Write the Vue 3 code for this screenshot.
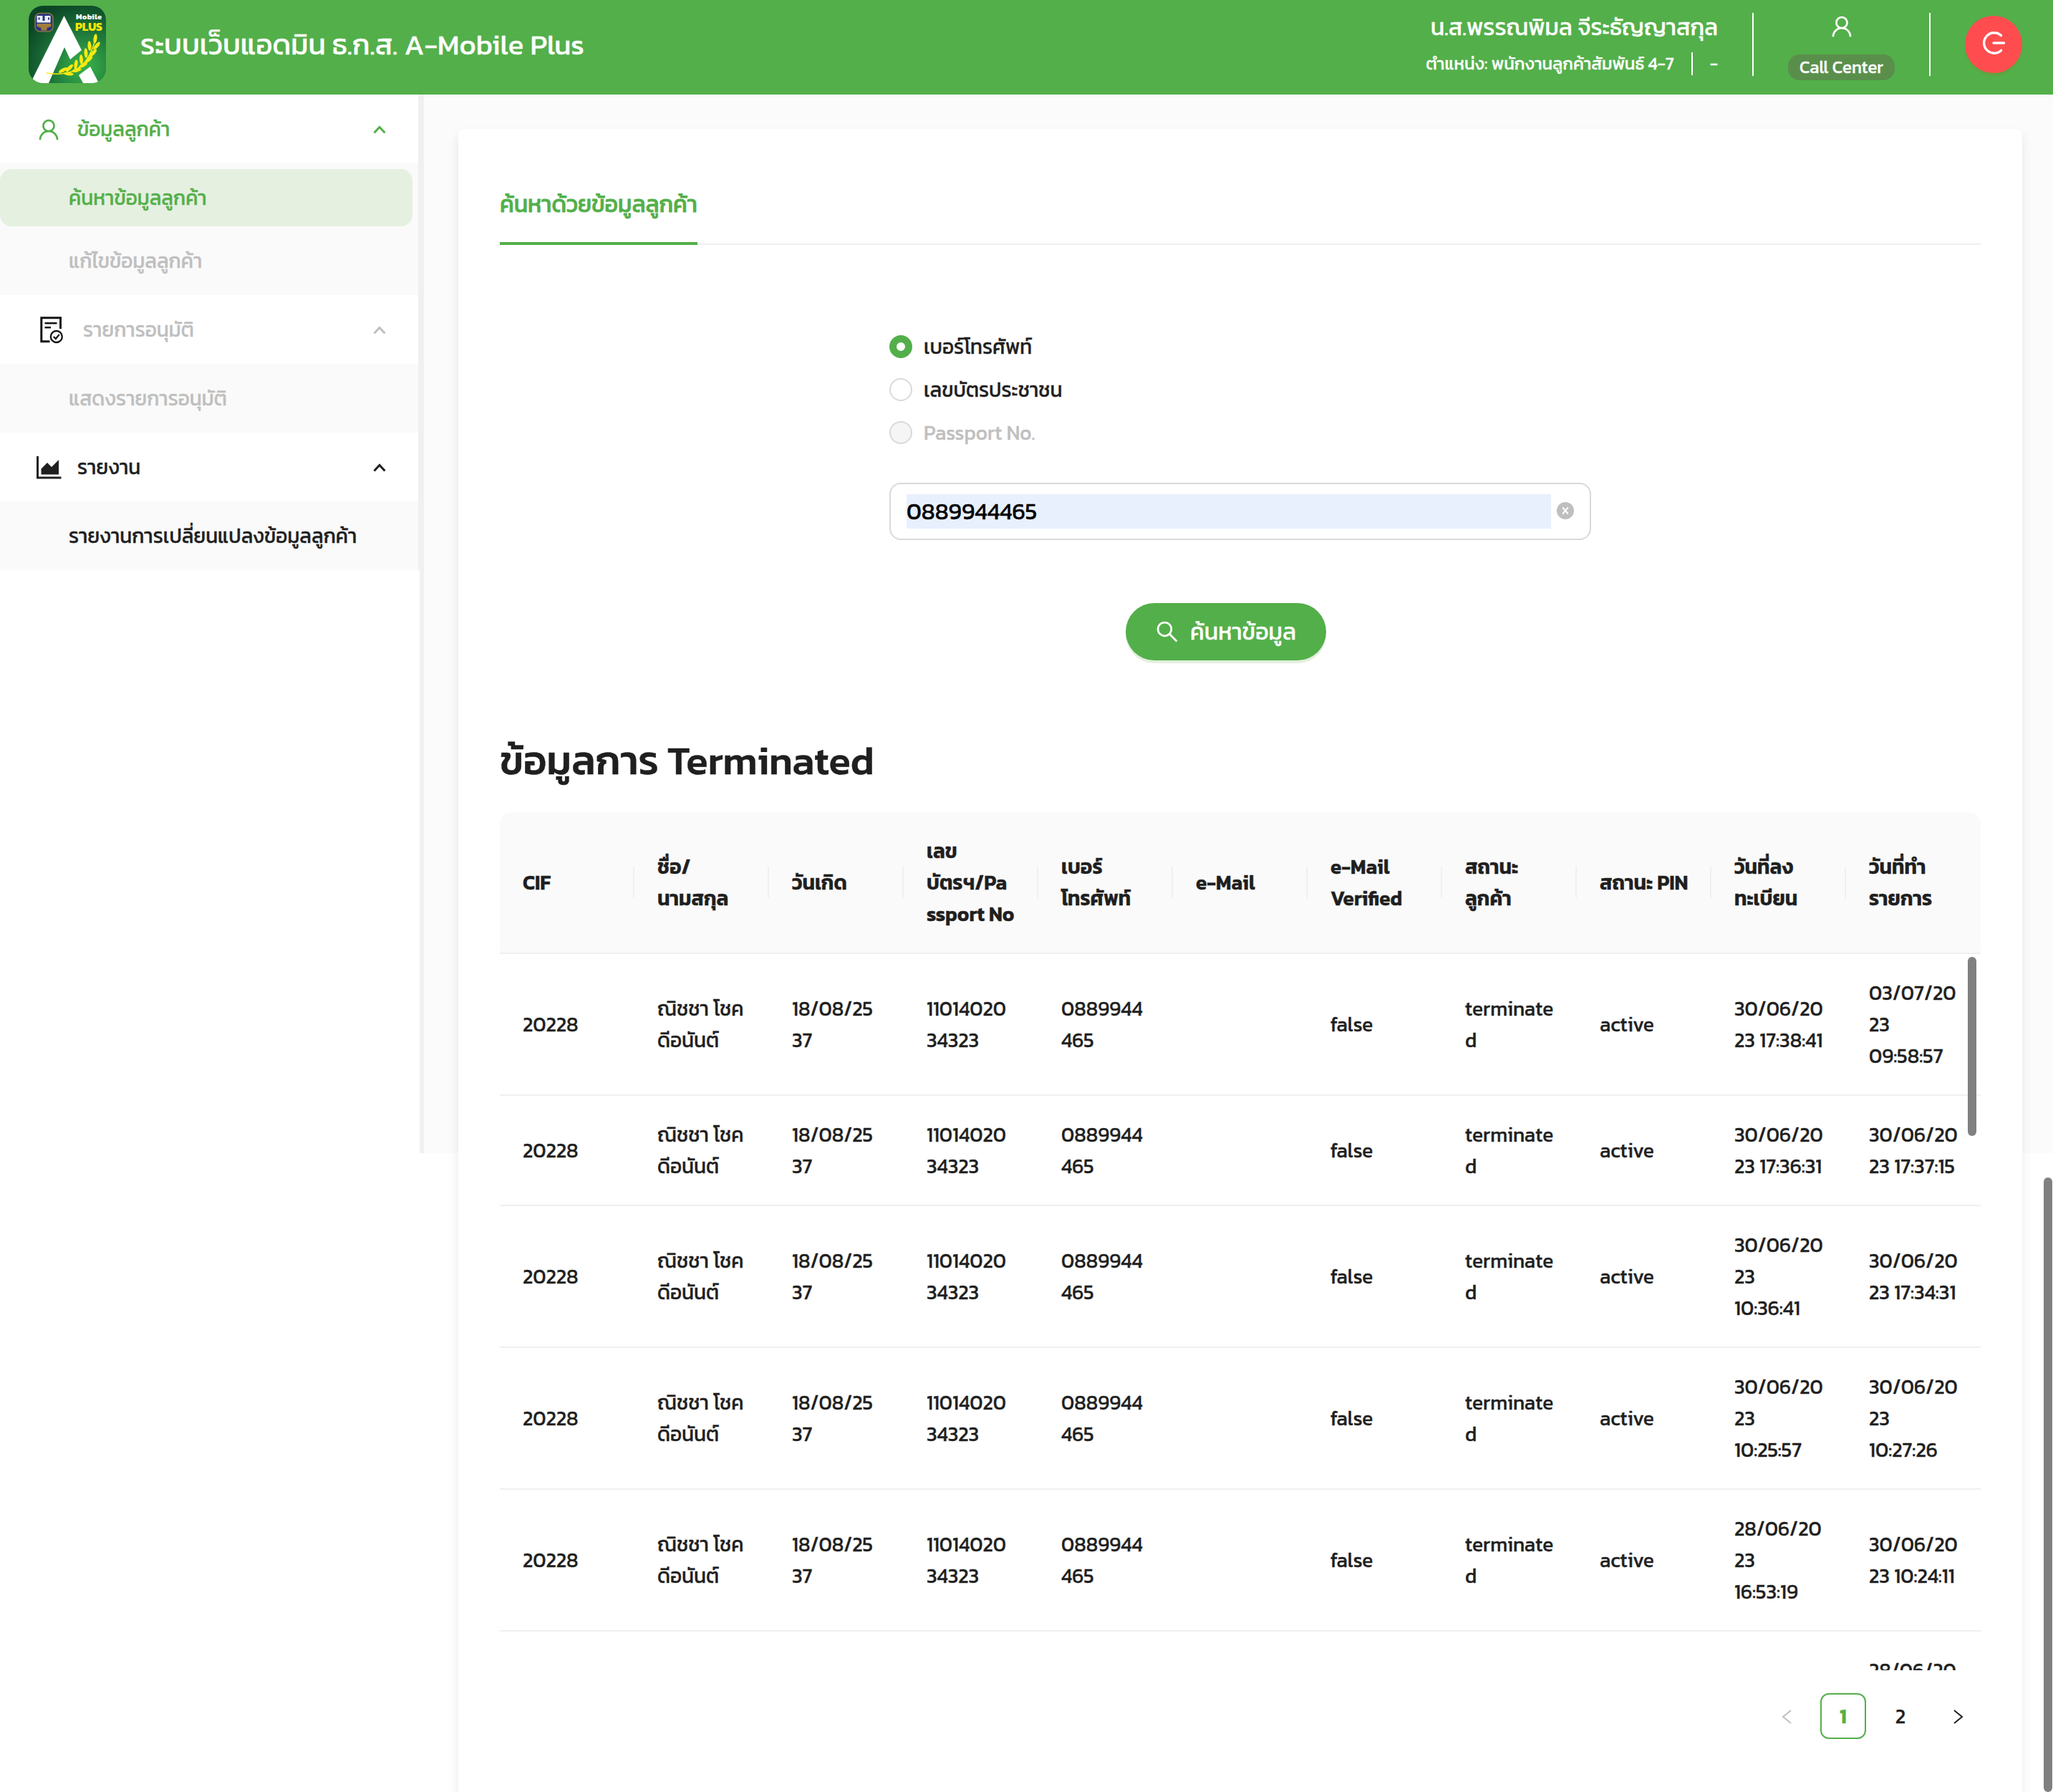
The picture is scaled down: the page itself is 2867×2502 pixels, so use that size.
<script setup>
const menu = [
  {
    icon: 'user', label: 'ข้อมูลลูกค้า', state: 'active',
    children: [
      { label: 'ค้นหาข้อมูลลูกค้า', state: 'selected' },
      { label: 'แก้ไขข้อมูลลูกค้า', state: 'disabled' },
    ],
  },
  {
    icon: 'approve', label: 'รายการอนุมัติ', state: 'disabled',
    children: [{ label: 'แสดงรายการอนุมัติ', state: 'disabled' }],
  },
  {
    icon: 'chart', label: 'รายงาน', state: '',
    children: [{ label: 'รายงานการเปลี่ยนแปลงข้อมูลลูกค้า', state: '' }],
  },
]

const searchTypes = [
  { label: 'เบอร์โทรศัพท์', state: 'checked' },
  { label: 'เลขบัตรประชาชน', state: '' },
  { label: 'Passport No.', state: 'disabled' },
]

const columns = [
  ['CIF'],
  ['ชื่อ/', 'นามสกุล'],
  ['วันเกิด'],
  ['เลข', 'บัตรฯ/Pa', 'ssport No'],
  ['เบอร์', 'โทรศัพท์'],
  ['e-Mail'],
  ['e-Mail', 'Verified'],
  ['สถานะ', 'ลูกค้า'],
  ['สถานะ PIN'],
  ['วันที่ลง', 'ทะเบียน'],
  ['วันที่ทำ', 'รายการ'],
]

const record = (registered, updated) => [
  ['20228'],
  ['ณิชชา โชค', 'ดีอนันต์'],
  ['18/08/25', '37'],
  ['11014020', '34323'],
  ['0889944', '465'],
  [],
  ['false'],
  ['terminate', 'd'],
  ['active'],
  registered,
  updated,
]

const rows = [
  record(['30/06/20', '23 17:38:41'], ['03/07/20', '23', '09:58:57']),
  record(['30/06/20', '23 17:36:31'], ['30/06/20', '23 17:37:15']),
  record(['30/06/20', '23', '10:36:41'], ['30/06/20', '23 17:34:31']),
  record(['30/06/20', '23', '10:25:57'], ['30/06/20', '23', '10:27:26']),
  record(['28/06/20', '23', '16:53:19'], ['30/06/20', '23 10:24:11']),
]

const userPath = 'M858.5 763.6a374 374 0 00-80.6-119.5 375.63 375.63 0 00-119.5-80.6c-.4-.2-.8-.3-1.2-.5C719.5 518 760 444.7 760 362c0-137-111-248-248-248S264 225 264 362c0 82.7 40.5 156 102.8 201.1-.4.2-.8.3-1.2.5-44.8 18.9-85 46-119.5 80.6a375.63 375.63 0 00-80.6 119.5A371.7 371.7 0 00136 901.8a8 8 0 008 8.2h60c4.4 0 7.9-3.5 8-7.8 2-77.2 33-149.5 87.8-204.3 56.7-56.7 132-87.9 212.2-87.9s155.5 31.2 212.2 87.9C779 752.7 810 825 812 902.2c.1 4.4 3.6 7.8 8 7.8h60a8 8 0 008-8.2c-1-47.8-10.9-94.3-29.5-138.2zM512 534c-45.9 0-89.1-17.9-121.6-50.4S340 407.9 340 362c0-45.9 17.9-89.1 50.4-121.6S466.1 190 512 190s89.1 17.9 121.6 50.4S684 316.1 684 362c0 45.9-17.9 89.1-50.4 121.6S557.9 534 512 534z'
const searchPath = 'M909.6 854.5L649.9 594.8C690.2 542.7 712 479 712 412c0-80.2-31.3-155.4-87.9-212.1-56.6-56.7-132-87.9-212.1-87.9s-155.5 31.3-212.1 87.9C143.2 256.5 112 331.8 112 412c0 80.1 31.3 155.5 87.9 212.1C256.5 680.8 331.8 712 412 712c67 0 130.6-21.8 182.7-62l259.7 259.6a8.2 8.2 0 0011.6 0l43.6-43.5a8.2 8.2 0 000-11.6zM570.4 570.4C528 612.7 471.8 636 412 636s-116-23.3-158.4-65.6C211.3 528 188 471.8 188 412s23.3-116.1 65.6-158.4C296 211.3 352.2 188 412 188s116.1 23.2 158.4 65.6S636 352.2 636 412s-23.3 116.1-65.6 158.4z'
// Each leaf of the rice ear: centre x, centre y, rotation
const leaves = [
  [93, 46, 8], [85, 56, -4], [80, 66, -4], [73.5, 75, -4], [66, 82, 8], [57, 87, 45], [48, 90, 62],
  [95, 56, 40], [90, 66, 45], [84, 75, 50], [76, 83, 62], [67, 90, 75], [56, 95, 95],
]
</script>

<template>
  <div class="app">
    <header class="topbar">
      <svg class="logo" viewBox="0 0 108 108">
        <defs>
          <radialGradient id="logoBg" cx="0.72" cy="0.78" r="0.85">
            <stop offset="0" stop-color="#3bb54a" />
            <stop offset="0.5" stop-color="#1f7a3b" />
            <stop offset="1" stop-color="#0b4526" />
          </radialGradient>
          <clipPath id="logoClip"><rect width="108" height="108" rx="20" /></clipPath>
        </defs>
        <g clip-path="url(#logoClip)">
          <rect width="108" height="108" fill="url(#logoBg)" />
          <path d="M49.500 14 L74 62 L58 75 L50 58 L28 108 L6 108 L6 101Z" fill="#fff" />
          <path d="M70 97 L86 85 L98 108 L76 108Z" fill="#fff" />
          <path d="M25 94 Q62 100 80 77 Q90 63 94 42" fill="none" stroke="#f6ea10" stroke-width="1.500" />
          <ellipse
            v-for="([x, y, r], i) in leaves" :key="i" :cx="x" :cy="y" rx="2.500" ry="6.800"
            :transform="`rotate(${r} ${x} ${y})`" fill="#f6ea10"
          />
          <rect x="9" y="10.500" width="25" height="25.500" rx="7" fill="#26347d" stroke="#8b7440" stroke-width="1.600" />
          <path d="M11.500 14h8v7h3v-7h8v9.500h-19z" fill="#e8eefb" />
          <path d="M13.500 16.500h2v3h-2zM27 16.500h2v3h-2z" fill="#26347d" />
          <path d="M11.500 25h20v4l-6 2v3.500h-8v-3.500l-6-2z" fill="#a07c3c" />
          <text x="66" y="19" class="logo-sub" textLength="36">Mobile</text>
          <text x="65" y="35" class="logo-plus" textLength="38">PLUS</text>
        </g>
      </svg>
      <h1 class="title">ระบบเว็บแอดมิน ธ.ก.ส. A-Mobile Plus</h1>
      <div class="account">
        <div class="name">น.ส.พรรณพิมล จีระธัญญาสกุล</div>
        <div class="role"><span>ตำแหน่ง: พนักงานลูกค้าสัมพันธ์ 4-7</span><i class="bar"></i><span>-</span></div>
      </div>
      <i class="divider"></i>
      <div class="center">
        <svg class="icon" viewBox="64 64 896 896"><path :d="userPath" /></svg>
        <span class="badge">Call Center</span>
      </div>
      <i class="divider"></i>
      <button class="logout">
        <svg viewBox="0 0 32 32" width="32" height="32" fill="none" stroke="#fff" stroke-width="3.400" stroke-linecap="round">
          <path d="M26.500 5.600A14.200 14.200 0 1 0 26.500 26.400" /><path d="M16 16h14.500" />
        </svg>
      </button>
    </header>

    <div class="body">
      <aside class="sidebar">
        <nav class="menu">
          <section v-for="group in menu" :key="group.label">
            <div class="group" :class="group.state">
              <svg v-if="group.icon === 'user'" class="icon g-user" viewBox="64 64 896 896"><path :d="userPath" /></svg>
              <svg v-else-if="group.icon === 'approve'" class="g-approve" viewBox="0 0 34 38" fill="none" stroke="#141414" stroke-width="3">
                <path d="M13.500 34.700H1.800V1.800H28.500V17" />
                <path d="M6.500 9.300H23.500M6.500 15.300H15" stroke-width="2.400" />
                <circle cx="22.800" cy="28" r="8" stroke-width="2.300" />
                <path d="M18.800 28l3 3 5-6" stroke-width="2.200" />
              </svg>
              <svg v-else class="g-chart" viewBox="0 0 35 32" fill="#1f1f1f">
                <path d="M0 0H3V28.500H34.500V31.500H0Z" />
                <path d="M6.500 25.500V17.500L15 9L21 15L31 5V25.500Z" />
              </svg>
              <span class="group-label">{{ group.label }}</span>
              <svg class="chevron" viewBox="0 0 20 14" fill="none" stroke="currentColor" stroke-width="3"><path d="M2.500 11.500L10 3.500L17.500 11.500" /></svg>
            </div>
            <ul class="sub">
              <li v-for="child in group.children" :key="child.label" :class="child.state">{{ child.label }}</li>
            </ul>
          </section>
        </nav>
      </aside>

      <main class="content">
        <div class="card">
          <div class="tabs"><span class="tab">ค้นหาด้วยข้อมูลลูกค้า</span></div>

          <form class="search">
            <label v-for="type in searchTypes" :key="type.label" class="radio" :class="type.state">
              <i class="dot"></i>{{ type.label }}
            </label>
            <div class="field">
              <span class="value">0889944465</span>
              <svg class="clear" viewBox="0 0 24 24"><circle cx="12" cy="12" r="12" fill="#bfbfbf" /><path d="M8.200 7.500l7.600 9M15.800 7.500l-7.600 9" stroke="#fff" stroke-width="2" /></svg>
            </div>
            <button type="button" class="submit">
              <svg class="icon" viewBox="64 64 896 896"><path :d="searchPath" /></svg>
              <span>ค้นหาข้อมูล</span>
            </button>
          </form>

          <h2 class="heading">ข้อมูลการ Terminated</h2>

          <div class="table">
            <div class="row head">
              <div v-for="(col, i) in columns" :key="i" class="cell">
                <div><div v-for="line in col" :key="line">{{ line }}</div></div>
              </div>
            </div>
            <div class="rows">
              <div v-for="(row, r) in rows" :key="r" class="row">
                <div v-for="(cell, c) in row" :key="c" class="cell">
                  <div><div v-for="line in cell" :key="line">{{ line }}</div></div>
                </div>
              </div>
              <div class="row partial">
                <div v-for="n in 10" :key="n" class="cell"></div>
                <div class="cell"><div>28/06/20</div></div>
              </div>
              <i class="thumb"></i>
            </div>
          </div>

          <div class="pager">
            <span class="page off"><svg viewBox="0 0 14 20" fill="none" stroke="currentColor" stroke-width="2"><path d="M13 1L2 10L13 19" /></svg></span>
            <span class="page current">1</span>
            <span class="page">2</span>
            <span class="page"><svg viewBox="0 0 14 20" fill="none" stroke="currentColor" stroke-width="2"><path d="M1 1L12 10L1 19" /></svg></span>
          </div>
        </div>
      </main>
      <i class="page-thumb"></i>
    </div>
  </div>
</template>

<style>
body { margin: 0; background: #fff; overflow: hidden; }
</style>

<style scoped>
* { box-sizing: border-box; }
.app {
  height: 2502px;
  overflow: hidden;
  font-family: Kanit, 'Noto Sans Thai', 'Noto Sans', sans-serif;
  font-size: 28px;
  line-height: 44px;
  color: #1f1f1f;
  -webkit-text-stroke: 0.4px currentColor;
}
.icon { width: 32px; height: 32px; fill: currentColor; flex: none; }

.topbar {
  height: 132px;
  display: flex;
  align-items: flex-start;
  padding: 0 43px 0 40px;
  background: #53af4a;
  color: #fff;
}
.logo { width: 108px; height: 108px; margin-top: 8px; flex: none; }
.logo-sub { font: 700 11px Kanit, sans-serif; fill: #fff; }
.logo-plus { font: 700 16px Kanit, sans-serif; fill: #ffe600; -webkit-text-stroke: 0; }
.title { margin: 31px 0 0 48px; font-size: 40px; line-height: 62px; font-weight: 400; white-space: nowrap; }
.account { margin-left: auto; width: 420px; text-align: right; white-space: nowrap; }
.name { margin-top: 13px; font-size: 32px; line-height: 50px; }
.role { display: flex; justify-content: flex-end; align-items: center; margin-top: 7px; font-size: 24px; line-height: 38px; }
.bar { width: 2px; height: 32px; margin: 0 24px; background: #fff; }
.divider { width: 2px; height: 88px; margin: 18px 48px 0; background: #fff; flex: none; }
.center { width: 149px; display: flex; flex-direction: column; align-items: center; padding-top: 21px; flex: none; }
.badge {
  width: 149px; height: 36px; margin-top: 23px; border-radius: 16px;
  background: #5a8f4b; font-size: 24px; line-height: 36px; text-align: center;
}
.logout {
  width: 80px; height: 80px; margin-top: 22px; padding: 0 0 4px; border: 0; border-radius: 50%;
  background: #ff4d4f; box-shadow: 0 4px 0 rgba(110, 150, 50, 0.45);
  display: flex; align-items: center; justify-content: center; flex: none;
}

.body { position: relative; display: flex; height: 2370px; }
.sidebar { width: 592px; height: 1478px; border-right: 6px solid #f0f0f0; background: #fff; flex: none; }
.menu { border-right: 2px solid #f0f0f0; }
.group { height: 96px; display: flex; align-items: center; padding: 0 44px 0 52px; }
.group-label { margin-left: 24px; }
.g-user { margin-top: 2px; }
.g-approve { width: 34px; height: 38px; margin: 2px 2px 0 4px; }
.g-chart { width: 35px; height: 32px; margin: 1px -2px 0 -1px; }
.chevron { width: 20px; height: 14px; margin-left: auto; margin-top: 2px; }
.active, .selected { color: #53af4a; }
.disabled { color: #bfbfbf; }
.sub { margin: 0; padding: 8px 0; background: #fafafa; list-style: none; }
.sub li { height: 80px; margin: 0 8px 0 0; padding-left: 96px; line-height: 80px; border-radius: 16px; white-space: nowrap; }
.sub li + li { margin-top: 8px; }
.sub .selected { background: #e5f0e0; }

.content { flex: 1; height: 1478px; padding: 48px 43px 0 48px; background: #fbfbfb; }
.card {
  height: 2400px; padding: 0 58px; border-radius: 8px; background: #fff;
  box-shadow: 0 8px 16px rgba(0, 0, 0, 0.09);
}
.tabs { height: 162px; padding-top: 80px; border-bottom: 2px solid #f0f0f0; display: flex; }
.tab {
  height: 82px; border-bottom: 4px solid #53af4a; font-size: 32px; line-height: 50px; font-weight: 400;
  color: #53af4a; -webkit-text-stroke-width: 0.9px; white-space: nowrap;
}

.search { width: 980px; margin: 112px auto 0; display: flex; flex-direction: column; }
.radio { height: 60px; display: flex; align-items: center; gap: 16px; }
.radio .dot { width: 32px; height: 32px; border: 2px solid #d9d9d9; border-radius: 50%; background: #fff; }
.radio.checked .dot { border: 10px solid #53af4a; }
.radio.disabled .dot { background: #f5f5f5; }
.field {
  height: 80px; margin-top: 40px; padding: 0 22px; border: 2px solid #d9d9d9; border-radius: 16px;
  display: flex; align-items: center; justify-content: space-between;
}
.value { width: 900px; height: 48px; background: #e8f0fe; font-size: 32px; line-height: 48px; color: #000; }
.clear { width: 24px; height: 24px; margin-bottom: 2px; }
.submit {
  align-self: center; height: 80px; width: 280px; margin: 88px 40px 0 0; padding: 0; border: 0; border-radius: 40px;
  background: #53af4a; box-shadow: 0 4px 0 #e2efdd; color: #fff; font: 400 32px/50px Kanit, sans-serif;
  display: flex; align-items: center; justify-content: center; gap: 16px;
}
.submit .icon { margin-bottom: 1px; }

.heading { margin: 104px 0 0; font-size: 56px; line-height: 70px; font-weight: 500; }
.table { margin-top: 38px; }
.row { display: flex; border-bottom: 2px solid #f0f0f0; }
.cell { flex: 1 1 0; padding: 32px; display: flex; align-items: center; white-space: nowrap; position: relative; min-width: 0; }
.head { background: #fafafa; border-radius: 16px 16px 0 0; font-weight: 600; }
.head .cell:not(:last-child)::after {
  content: ''; position: absolute; right: 0; top: calc(50% - 22px); width: 2px; height: 44px; background: #f0f0f0;
}
.rows { position: relative; height: 1000px; overflow: hidden; }
.thumb { position: absolute; right: 6px; top: 4px; width: 12px; height: 250px; border-radius: 6px; background: #808080; }

.pager { display: flex; justify-content: flex-end; gap: 16px; margin-top: 32px; }
.page { width: 64px; height: 64px; display: flex; align-items: center; justify-content: center; border-radius: 12px; }
.page svg { width: 14px; height: 20px; margin: 2px 0 0 1px; }
.current { border: 2px solid #53af4a; color: #53af4a; font-weight: 600; }
.off { color: #bfbfbf; }

.page-thumb { position: absolute; right: 1px; top: 1512px; width: 12px; height: 858px; border-radius: 6px; background: #808080; }
</style>
